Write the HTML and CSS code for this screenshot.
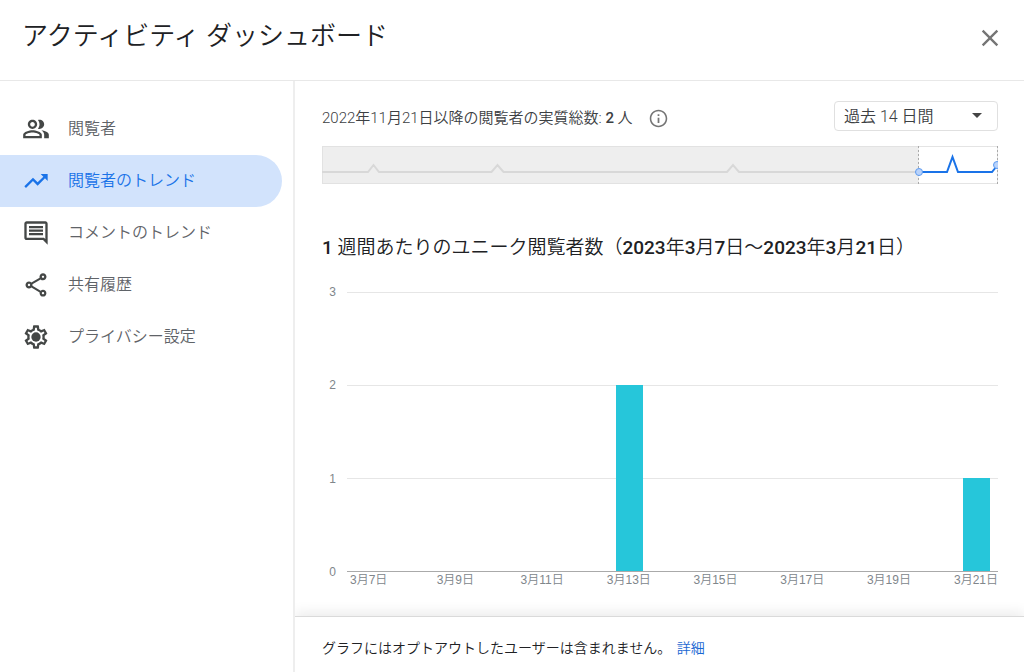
FILE: index.html
```html
<!DOCTYPE html>
<html lang="ja">
<head>
<meta charset="utf-8">
<meta name="viewport" content="width=device-width, initial-scale=1">
<title>アクティビティ ダッシュボード</title>
<link rel="stylesheet" href="styles.css">
</head>
<body>
<div class="dialog">
  <header class="header">
    <h1 class="title">アクティビティ ダッシュボード</h1>
    <button class="close" type="button" aria-label="閉じる">
      <svg width="28" height="28" viewBox="0 0 24 24"><path d="M19 6.41 17.59 5 12 10.59 6.41 5 5 6.41 10.59 12 5 17.59 6.41 19 12 13.41 17.59 19 19 17.59 13.41 12z"/></svg>
    </button>
  </header>
  <nav class="sidebar">
    <a class="nav-item" href="#viewers">
      <svg class="icon" viewBox="0 0 24 24"><path d="M16.67 13.13C18.04 14.06 19 15.32 19 17v3h4v-3c0-2.18-3.57-3.47-6.33-3.87zM15 12c2.21 0 4-1.79 4-4s-1.79-4-4-4c-.47 0-.91.1-1.33.24C14.5 5.27 15 6.58 15 8s-.5 2.73-1.33 3.76c.42.14.86.24 1.33.24zM9 12c2.21 0 4-1.79 4-4s-1.79-4-4-4-4 1.79-4 4 1.79 4 4 4zm0-6c1.1 0 2 .9 2 2s-.9 2-2 2-2-.9-2-2 .9-2 2-2zM9 13c-2.67 0-8 1.34-8 4v3h16v-3c0-2.66-5.33-4-8-4zm6 5H3v-.99C3.2 16.29 6.3 15 9 15s5.8 1.29 6 2v1z"/></svg>
      <span>閲覧者</span>
    </a>
    <a class="nav-item nav-item-active" href="#viewer-trend" aria-current="page">
      <svg class="icon" viewBox="0 0 24 24"><path d="m16 6 2.29 2.29-4.88 4.88-4-4L2 16.59 3.41 18l6-6 4 4 6.3-6.29L22 12V6z"/></svg>
      <span>閲覧者のトレンド</span>
    </a>
    <a class="nav-item" href="#comment-trend">
      <svg class="icon" viewBox="0 0 24 24"><path d="M21.99 4c0-1.1-.89-2-1.99-2H4c-1.1 0-2 .9-2 2v12c0 1.1.9 2 2 2h14l4 4-.01-18zM20 4v13.17L18.83 16H4V4h16zM6 12h12v2H6zm0-3h12v2H6zm0-3h12v2H6z"/></svg>
      <span>コメントのトレンド</span>
    </a>
    <a class="nav-item" href="#sharing">
      <svg class="icon" viewBox="0 0 24 24"><path d="M18 16.08c-.76 0-1.44.3-1.96.77L8.91 12.7c.05-.23.09-.46.09-.7s-.04-.47-.09-.7l7.05-4.11c.54.5 1.25.81 2.04.81 1.66 0 3-1.34 3-3s-1.34-3-3-3-3 1.34-3 3c0 .24.04.47.09.7L8.04 9.81C7.5 9.31 6.79 9 6 9c-1.66 0-3 1.34-3 3s1.34 3 3 3c.79 0 1.5-.31 2.04-.81l7.12 4.16c-.05.21-.08.43-.08.65 0 1.61 1.31 2.92 2.92 2.92s2.92-1.31 2.92-2.92-1.31-2.92-2.92-2.92zM18 4c.55 0 1 .45 1 1s-.45 1-1 1-1-.45-1-1 .45-1 1-1zM6 13c-.55 0-1-.45-1-1s.45-1 1-1 1 .45 1 1-.45 1-1 1zm12 7.02c-.55 0-1-.45-1-1s.45-1 1-1 1 .45 1 1-.45 1-1 1z"/></svg>
      <span>共有履歴</span>
    </a>
    <a class="nav-item" href="#privacy">
      <svg class="icon" viewBox="0 0 24 24"><path d="M19.43 12.98c.04-.32.07-.64.07-.98 0-.34-.03-.66-.07-.98l2.11-1.65c.19-.15.24-.42.12-.64l-2-3.46c-.09-.16-.26-.25-.44-.25-.06 0-.12.01-.17.03l-2.49 1c-.52-.4-1.08-.73-1.69-.98l-.38-2.65C14.46 2.18 14.25 2 14 2h-4c-.25 0-.46.18-.49.42l-.38 2.65c-.61.25-1.17.59-1.69.98l-2.49-1c-.06-.02-.12-.03-.18-.03-.17 0-.34.09-.43.25l-2 3.46c-.13.22-.07.49.12.64l2.11 1.65c-.04.32-.07.65-.07.98 0 .33.03.66.07.98l-2.11 1.65c-.19.15-.24.42-.12.64l2 3.46c.09.16.26.25.44.25.06 0 .12-.01.17-.03l2.49-1c.52.4 1.08.73 1.69.98l.38 2.65c.03.24.24.42.49.42h4c.25 0 .46-.18.49-.42l.38-2.65c.61-.25 1.17-.59 1.69-.98l2.49 1c.06.02.12.03.18.03.17 0 .34-.09.43-.25l2-3.46c.12-.22.07-.49-.12-.64l-2.11-1.65zm-1.98-1.71c.04.31.05.52.05.73 0 .21-.02.43-.05.73l-.14 1.13.89.7 1.08.84-.7 1.21-1.27-.51-1.04-.42-.9.68c-.43.32-.84.56-1.25.73l-1.06.43-.16 1.13-.2 1.35h-1.4l-.19-1.35-.16-1.13-1.06-.43c-.43-.18-.83-.41-1.23-.71l-.91-.7-1.06.43-1.27.51-.7-1.21 1.08-.84.89-.7-.14-1.13c-.03-.31-.05-.54-.05-.74s.02-.43.05-.73l.14-1.13-.89-.7-1.08-.84.7-1.21 1.27.51 1.04.42.9-.68c.43-.32.84-.56 1.25-.73l1.06-.43.16-1.13.2-1.35h1.39l.19 1.35.16 1.13 1.06.43c.43.18.83.41 1.23.71l.91.7 1.06-.43 1.27-.51.7 1.21-1.07.85-.89.7.14 1.13z"/><circle cx="12" cy="12" r="4"/></svg>
      <span>プライバシー設定</span>
    </a>
  </nav>
  <div class="panel">
    <main class="content">
      <div class="summary">
        <p class="total">2022年11月21日以降の閲覧者の実質総数: <b>2</b> 人</p>
        <button class="info" type="button" aria-label="情報">
          <svg width="21" height="21" viewBox="0 0 24 24"><path d="M11 7h2v2h-2zm0 4h2v6h-2zm1-9C6.480 2 2 6.480 2 12s4.480 10 10 10 10-4.480 10-10S17.520 2 12 2zm0 18.200c-4.500 0-8.200-3.700-8.200-8.200s3.700-8.200 8.200-8.200 8.200 3.700 8.200 8.200-3.700 8.200-8.200 8.200z"/></svg>
        </button>
        <div class="range">
          <select class="range-select" aria-label="期間">
            <option>過去 14 日間</option>
            <option>過去 28 日間</option>
          </select>
          <svg class="range-arrow" width="10" height="5" viewBox="0 0 10 5"><path d="M0 0h10L5 5z"/></svg>
        </div>
      </div>
      <svg class="overview" viewBox="0 0 676 38" preserveAspectRatio="none" role="img" aria-label="期間の概要">
        <rect x="0.500" y="0.500" width="675" height="37" fill="#fff" stroke="#e4e4e4"/>
        <rect x="0" y="0" width="597" height="38" fill="#eee"/>
        <path d="M0 .5H597M0 37.500H597M.5 0V38" stroke="#e2e2e2"/>
        <path d="M0 26H46L51.500 19 57 26H169.500L175.500 19 181.500 26H405L411 19 417 26H597" fill="none" stroke="#d8d8d8" stroke-width="2"/>
        <path d="M596.500 0V38M675.500 0V38" stroke="#aaa" stroke-dasharray="2 2"/>
        <path d="M597 26H625L630.500 11 636 26H670L676 18.500" fill="none" stroke="#1a73e8" stroke-width="2"/>
        <circle cx="597" cy="26" r="3.500" fill="#b9d3fb" stroke="#5d9bf0"/>
        <circle cx="675" cy="19" r="3.500" fill="#b9d3fb" stroke="#5d9bf0"/>
      </svg>
      <h2 class="chart-title"><b>1</b> 週間あたりのユニーク閲覧者数（<b>2023</b>年<b>3</b>月<b>7</b>日～<b>2023</b>年<b>3</b>月<b>21</b>日）</h2>
      <div class="chart">
        <div class="y-axis"><span>3</span><span>2</span><span>1</span><span>0</span></div>
        <div class="plot">
          <div class="bar bar-13" style="height:66.667%"></div>
          <div class="bar bar-21" style="height:33.333%"></div>
        </div>
        <div class="x-axis">
          <span>3月7日</span><span>3月9日</span><span>3月11日</span><span>3月13日</span><span>3月15日</span><span>3月17日</span><span>3月19日</span><span>3月21日</span>
        </div>
      </div>
    </main>
    <footer class="footer">グラフにはオプトアウトしたユーザーは含まれません。 <a class="more" href="#details">詳細</a></footer>
  </div>
</div>
</body>
</html>
```

FILE: styles.css
```css
* {
  box-sizing: border-box;
}

body {
  margin: 0;
  color: #3c4043;
  background: #fff;
  font-family: Roboto, "Noto Sans CJK JP", sans-serif;
  font-weight: 350;
}

h1, h2, p {
  margin: 0;
  font-weight: inherit;
}

b {
  font-weight: 500;
}

button {
  display: flex;
  align-items: center;
  padding: 0;
  border: 0;
  background: none;
}

.dialog {
  display: grid;
  grid-template-columns: 295px 1fr;
  grid-template-rows: auto 1fr;
  min-height: 100vh;
}

.header {
  grid-column: 1 / -1;
  display: flex;
  align-items: flex-end;
  justify-content: space-between;
  padding: 16px 20px 24px 22px;
  border-bottom: 1px solid #e8e8e8;
}

.title {
  font-size: 26px;
  line-height: 40px;
  color: #202124;
}

.close {
  height: 36px;
  fill: #757575;
}

.sidebar {
  padding-top: 22px;
  border-right: 2px solid #eee;
}

.nav-item {
  display: flex;
  align-items: center;
  gap: 18px;
  height: 52px;
  margin-right: 11px;
  padding-left: 22px;
  border-radius: 0 26px 26px 0;
  color: #5f6368;
  font-size: 16px;
  line-height: 24px;
  text-decoration: none;
}

.nav-item-active {
  color: #1a73e8;
  background: #d2e3fc;
}

.icon {
  width: 28px;
  height: 28px;
  fill: #444746;
}

.nav-item-active .icon {
  fill: #1a73e8;
}

.panel {
  display: flex;
  flex-direction: column;
  min-width: 0;
}

.content {
  flex: 1;
  padding: 20px 26px 24px 27px;
}

.summary {
  display: flex;
  align-items: flex-end;
  gap: 15px;
  margin-bottom: 15px;
}

.total {
  font-size: 15px;
  line-height: 26px;
}

.info {
  height: 26px;
  fill: #757575;
}

.range {
  position: relative;
  margin-left: auto;
}

.range-select {
  display: block;
  width: 164px;
  height: 30px;
  padding: 0 9px;
  border: 1px solid #e0e0e0;
  border-radius: 4px;
  color: #3c4043;
  background: #fff;
  font-family: inherit;
  font-size: 16px;
  font-weight: inherit;
  appearance: none;
}

.range-arrow {
  position: absolute;
  top: 12px;
  right: 16px;
  fill: #444;
  pointer-events: none;
}

.overview {
  display: block;
  width: 100%;
  height: 38px;
}

.chart-title {
  margin: 50px 0 30px;
  color: #202124;
  font-size: 19px;
  line-height: 28px;
}

.chart {
  display: grid;
  grid-template-columns: 14px 1fr;
  grid-template-rows: 280px auto;
  column-gap: 11px;
  color: #80868b;
  font-family: "Liberation Sans", "Noto Sans CJK JP", sans-serif;
  font-size: 12px;
  line-height: 16px;
}

.y-axis {
  display: flex;
  flex-direction: column;
  justify-content: space-between;
  margin: -8px 0;
  text-align: right;
}

.plot {
  display: grid;
  grid-template-columns: repeat(15, 1fr);
  align-items: end;
  border-bottom: 1px solid #aaa;
  background: repeating-linear-gradient(#e6e6e6 0 1px, transparent 1px 93px);
}

.bar {
  grid-row: 1;
  justify-self: center;
  width: 62%;
  background: #26c6da;
}

.bar-13 {
  grid-column: 7;
}

.bar-21 {
  grid-column: 15;
}

.x-axis {
  grid-column: 2;
  display: grid;
  grid-template-columns: repeat(7, 2fr) 1fr;
}

.x-axis span {
  display: flex;
  justify-content: center;
  width: 50%;
  white-space: nowrap;
}

.x-axis span:last-child {
  width: 100%;
}

.footer {
  padding: 19px 27px 12px;
  border-top: 1px solid #dadada;
  box-shadow: 0 -4px 12px rgba(0, 0, 0, 0.08);
  clip-path: inset(-20px 0 0);
  color: #202124;
  font-size: 14px;
  line-height: 24px;
}

.more {
  margin-left: 2px;
  color: #1967d2;
  text-decoration: none;
}
```
